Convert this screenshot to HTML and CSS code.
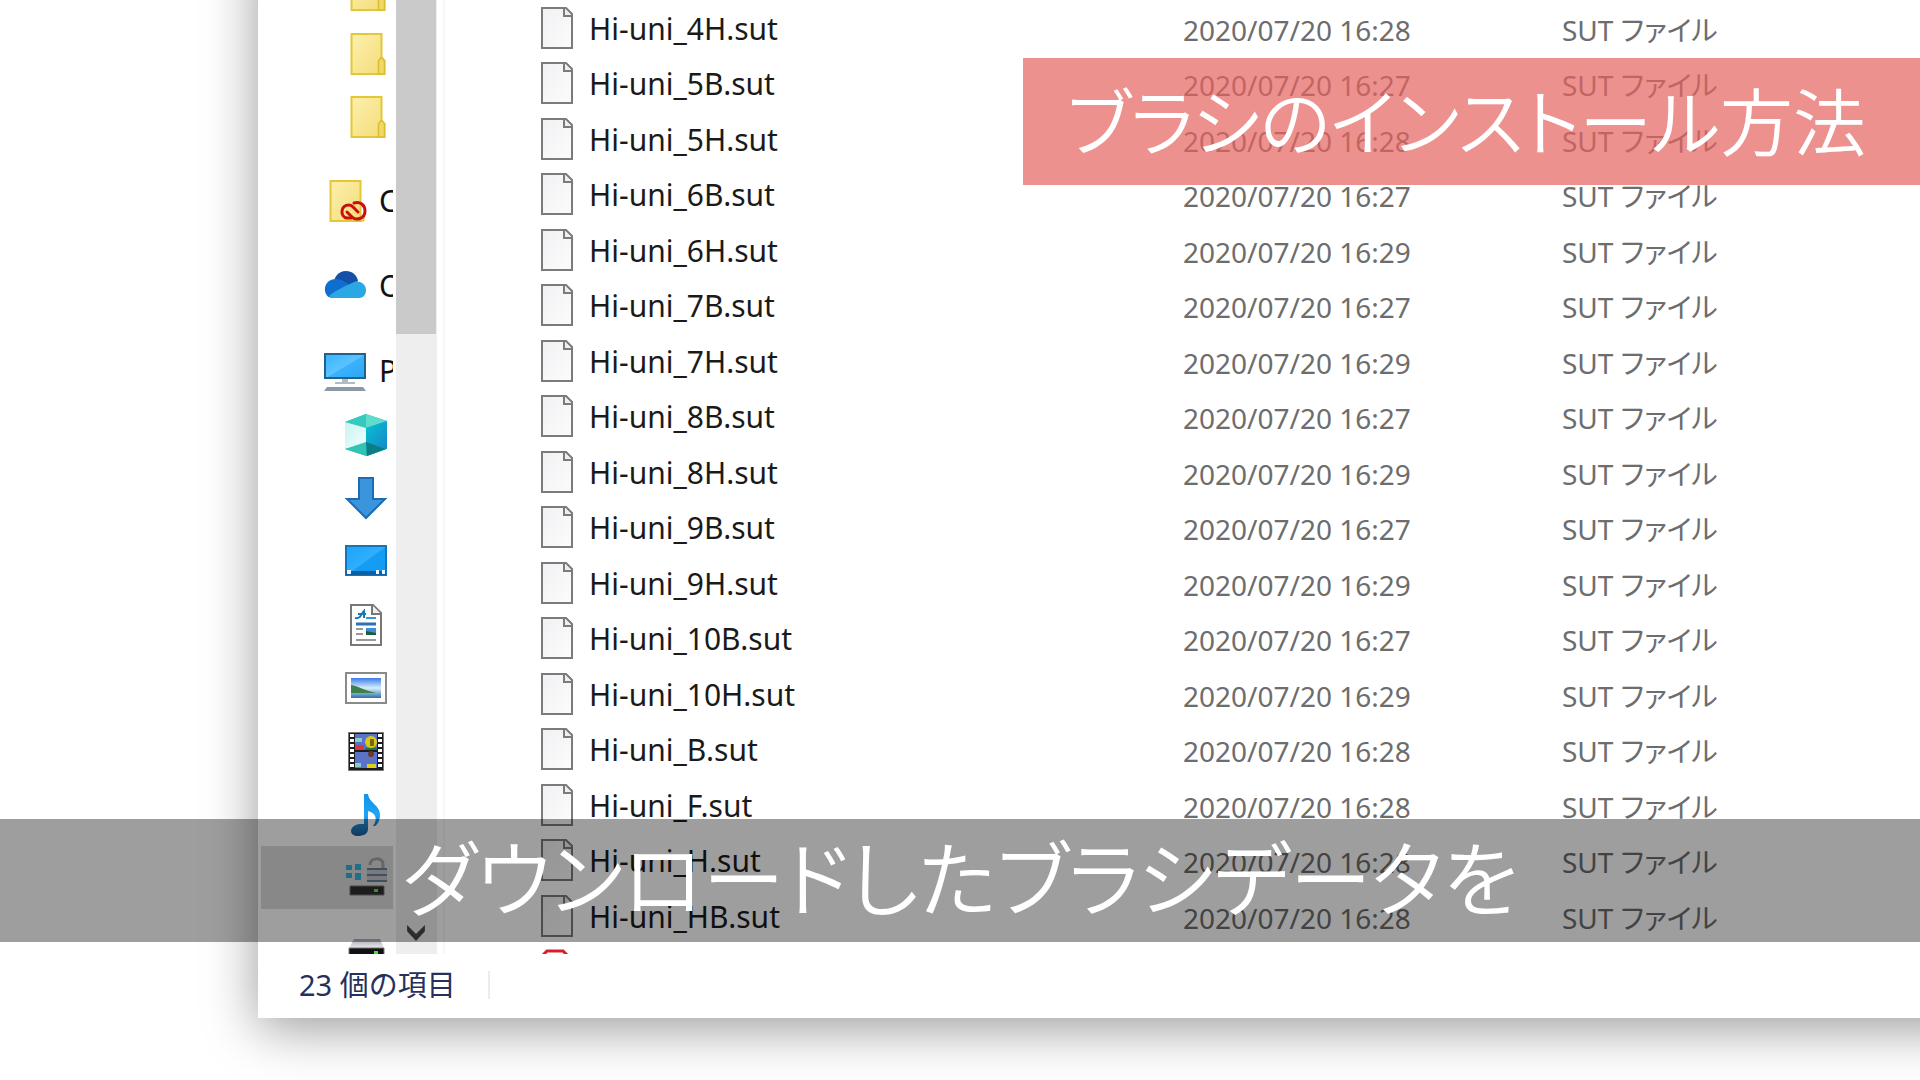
FILE: index.html
```html
<!DOCTYPE html>
<html lang="ja">
<head>
<meta charset="utf-8">
<title>ブラシのインストール方法</title>
<link rel="stylesheet" href="styles.css">
</head>
<body>
<svg class="defs" aria-hidden="true">
  <defs>
    <linearGradient id="gFolder" x1="0" y1="0" x2="1" y2="1"><stop offset="0" stop-color="#fdf0ae"/><stop offset="1" stop-color="#f3dc78"/></linearGradient>
    <linearGradient id="gScreen" x1="0" y1="0" x2="1" y2="1"><stop offset="0" stop-color="#35b4ff"/><stop offset=".5" stop-color="#5cc3ff"/><stop offset=".52" stop-color="#3bb2fb"/><stop offset="1" stop-color="#2aa6f5"/></linearGradient>
    <linearGradient id="gDesk" x1="0" y1="0" x2="1" y2="1"><stop offset="0" stop-color="#1ba4fb"/><stop offset=".5" stop-color="#30aefc"/><stop offset=".52" stop-color="#149df5"/><stop offset="1" stop-color="#1699f0"/></linearGradient>
    <linearGradient id="gPage" x1="0" y1="0" x2="1" y2="1"><stop offset="0" stop-color="#f1f1f3"/><stop offset="1" stop-color="#fcfcfd"/></linearGradient>
    <linearGradient id="gCube" x1="0" y1="0" x2="1" y2="1"><stop offset="0" stop-color="#c9f3f1"/><stop offset="1" stop-color="#f1fffd"/></linearGradient>
    <linearGradient id="gCubeR" x1="0" y1="0" x2="1" y2="1"><stop offset="0" stop-color="#07c3d2"/><stop offset="1" stop-color="#1687c9"/></linearGradient>
    <linearGradient id="gSky" x1="0" y1="0" x2="0" y2="1"><stop offset="0" stop-color="#3d7be8"/><stop offset=".5" stop-color="#d6effb"/><stop offset="1" stop-color="#2f6fa8"/></linearGradient>
    <linearGradient id="gNote" x1="0" y1="0" x2="0" y2="1"><stop offset="0" stop-color="#1593e6"/><stop offset=".5" stop-color="#1ea4f4"/><stop offset="1" stop-color="#1e5f9c"/></linearGradient>
    <linearGradient id="gDrive" x1="0" y1="0" x2="0" y2="1"><stop offset="0" stop-color="#a9a9b0"/><stop offset="1" stop-color="#e8e8ee"/></linearGradient>
    <symbol id="folder" viewBox="0 0 42 42"><path d="M6.500 1h30v24.500l3 2V41h-33z" fill="url(#gFolder)" stroke="#e3c738" stroke-width="2"/><path d="M33.500 41V28l2-3h2l2 3v13z" fill="#f0d869" stroke="#dcbd2e" stroke-width="1.500"/></symbol>
    <symbol id="file" viewBox="0 0 32 42"><path d="M1 1h24l6 6v34H1z" fill="url(#gPage)" stroke="#7b7b7b" stroke-width="2"/><path d="M23 1v8h8" fill="#eee" stroke="#7b7b7b" stroke-width="2"/></symbol>
  </defs>
</svg>

<main class="stage">
  <section class="window">
    <div class="panes">
      <nav class="tree">
        <ul class="group">
          <li class="node sub"><svg class="icon"><use href="#folder"/></svg></li>
          <li class="node sub"><svg class="icon"><use href="#folder"/></svg></li>
          <li class="node sub"><svg class="icon"><use href="#folder"/></svg></li>
        </ul>
        <ul class="group">
          <li class="node"><svg class="icon" viewBox="0 0 42 42"><path d="M6.500 1h30v40h-30z" fill="url(#gFolder)" stroke="#e3c738" stroke-width="2"/><path d="M36 36h4v5h-4z" fill="#f0d869" stroke="#dcbd2e"/><g fill="none" stroke="#c9100f" stroke-width="3" stroke-linecap="round"><path d="M27 38h-4c-7-1-7-13 2-13 3 0 4 2 6 4l3 3"/><path d="M30 23c6-2 11 2 11 8 0 8-9 10-13 6l-5-5"/></g></svg>C</li>
        </ul>
        <ul class="group">
          <li class="node"><svg class="icon" viewBox="0 0 42 42"><path d="M10 20C9 13 14 6 22 6c6 0 11 4 12 10l-8 6z" fill="#1450a8"/><path d="M8 33c-10-1-10-19 4-19 7 0 10 5 20 8L14 33z" fill="#0f6fd0"/><path d="M5 31c7-6 17-10 25-14 7-2 12 3 12 8 0 4-2 8-7 8H8z" fill="#2aa7e4"/></svg>O</li>
        </ul>
        <ul class="group">
          <li class="node"><svg class="icon" viewBox="0 0 42 42"><path d="M1 4h40v24H1z" fill="url(#gScreen)" stroke="#23618c" stroke-width="2"/><path d="M18 29h6v3h7v2H11v-2h7z" fill="#b3bcc4"/><path d="M3 37h36l3 4H0z" fill="#8d99a7"/></svg>P</li>
          <li class="node sub"><svg class="icon" viewBox="0 0 42 42"><path d="M0 8l21-8 21 7v28l-20 7L0 35z" fill="#20b6b8"/><path d="M0 8l21-8v14z" fill="#35cabd"/><path d="M21 0l21 7-21 7z" fill="#5fdccc"/><path d="M0 8l21 6v17L0 35z" fill="url(#gCube)"/><path d="M21 14l21-7v28l-21-6z" fill="url(#gCubeR)"/><path d="M0 35l21-7v14z" fill="#2fc4b4"/><path d="M21 28l20 7-19 7z" fill="#0b7d86"/></svg></li>
          <li class="node sub"><svg class="icon" viewBox="0 0 42 42"><path d="M14 1h14v21h12L21 41 2 22h12z" fill="#3a95dc" stroke="#1b6cb4" stroke-width="2"/></svg></li>
          <li class="node sub"><svg class="icon" viewBox="0 0 42 42"><path d="M1 6h40v29H1z" fill="url(#gDesk)" stroke="#1874b8" stroke-width="2"/><path d="M1 31h40v4H1z" fill="#0c5fa3"/><path d="M2 30h4v4H2zM31 30h3v4h-3zM37 30h3v4h-3z" fill="#e8f6ff"/></svg></li>
          <li class="node sub"><svg class="icon" viewBox="0 0 42 42"><path d="M6 1h22l8 8v32H6z" fill="#fff" stroke="#777" stroke-width="2"/><path d="M27 1v9h9" fill="#eee" stroke="#777" stroke-width="2"/><path d="M10 14c6 1 6-4 9-7v7m-6-4h8" fill="none" stroke="#1b78b8" stroke-width="2"/><path d="M21 14h10" stroke="#2f9bd6" stroke-width="2"/><path d="M11 20h20" stroke="#2f6fb4" stroke-width="3"/><path d="M11 25h7M11 30h7M11 36h20" stroke="#999" stroke-width="2"/><path d="M21 24h10v7H21z" fill="#3f8fd8"/><path d="M21 27l10 2v2H21z" fill="#1c5b40"/></svg></li>
          <li class="node sub"><svg class="icon" viewBox="0 0 42 42"><path d="M1 6h40v30H1z" fill="#fff" stroke="#8a8a8a" stroke-width="2"/><path d="M6 11h30v20H6z" fill="url(#gSky)"/><path d="M6 18c8 1 14 6 25 8H6z" fill="#3f7f4c"/></svg></li>
          <li class="node sub"><svg class="icon" viewBox="0 0 42 42"><path d="M3.500 2.500h35v38h-35z" fill="#1b1b20" stroke="#777"/><path d="M10 4h22v16H10zM10 22h22v16H10z" fill="#5a72c8"/><path d="M10 15h9v5h-9z" fill="#d8393f"/><path d="M10 8h7v4h-7zM10 33h6v4h-6z" fill="#8fc9c8"/><circle cx="26" cy="12" r="6" fill="#d8c916"/><path d="M25 9h4v7h-4z" fill="#7a6612"/><path d="M20 18h12v2H20z" fill="#24733c"/><circle cx="26" cy="24" r="3" fill="#6e3820"/><path d="M22 34h9v4h-9z" fill="#e0cf13"/><path d="M7 4v35M35 4v35" stroke="#fff" stroke-width="4" stroke-dasharray="3 2"/></svg></li>
          <li class="node sub"><svg class="icon" viewBox="0 0 42 42"><path d="M19 0h4c1 9 12 11 12 21 0 5-2 9-5 11h-2c5-7 3-13-5-15v18c0 5-5 7-10 7-10 0-9-11 2-12h4z" fill="url(#gNote)"/></svg></li>
          <li class="node sub selected"><svg class="icon" viewBox="0 0 42 42"><path d="M1 8h6v5H1zM10 7h6v6h-6zM1 16h6v5H1zM10 16h6v7h-6z" fill="#32b4dd"/><path d="M25 8C25 0 38 0 38 7v4" fill="none" stroke="#a5a5a5" stroke-width="3"/><path d="M22 12h20v12H22z" fill="#c2c6ca"/><path d="M22 12h20M22 18h20M22 24h20" stroke="#68819a" stroke-width="2"/><path d="M5 29h34v9H5z" fill="#303030" stroke="#777"/><path d="M29 32h4v3h-4z" fill="#63e03c"/></svg></li>
          <li class="node sub"><svg class="icon" viewBox="0 0 42 42"><path d="M9 19h26l4 9H4z" fill="url(#gDrive)"/><path d="M4 28h35v10H4z" fill="#111" stroke="#777"/><path d="M29 31h4v4h-4z" fill="#3fe826"/></svg></li>
        </ul>
      </nav>
      <div class="scrollbar">
        <div class="thumb"></div>
        <button class="down" type="button" aria-label="下へスクロール"><svg viewBox="0 0 20 18"><path d="M0 2V0l10 10L20 0v7L10 18 0 7z" fill="#484848"/></svg></button>
      </div>
      <div class="list">
        <table class="files">
          <colgroup><col class="c-name"><col class="c-date"><col></colgroup>
          <tbody>
            <tr><td class="name"><div class="entry"><svg class="doc"><use href="#file"/></svg><span>Hi-uni_4H.sut</span></div></td><td>2020/07/20 16:28</td><td>SUT ファイル</td></tr>
            <tr><td class="name"><div class="entry"><svg class="doc"><use href="#file"/></svg><span>Hi-uni_5B.sut</span></div></td><td>2020/07/20 16:27</td><td>SUT ファイル</td></tr>
            <tr><td class="name"><div class="entry"><svg class="doc"><use href="#file"/></svg><span>Hi-uni_5H.sut</span></div></td><td>2020/07/20 16:28</td><td>SUT ファイル</td></tr>
            <tr><td class="name"><div class="entry"><svg class="doc"><use href="#file"/></svg><span>Hi-uni_6B.sut</span></div></td><td>2020/07/20 16:27</td><td>SUT ファイル</td></tr>
            <tr><td class="name"><div class="entry"><svg class="doc"><use href="#file"/></svg><span>Hi-uni_6H.sut</span></div></td><td>2020/07/20 16:29</td><td>SUT ファイル</td></tr>
            <tr><td class="name"><div class="entry"><svg class="doc"><use href="#file"/></svg><span>Hi-uni_7B.sut</span></div></td><td>2020/07/20 16:27</td><td>SUT ファイル</td></tr>
            <tr><td class="name"><div class="entry"><svg class="doc"><use href="#file"/></svg><span>Hi-uni_7H.sut</span></div></td><td>2020/07/20 16:29</td><td>SUT ファイル</td></tr>
            <tr><td class="name"><div class="entry"><svg class="doc"><use href="#file"/></svg><span>Hi-uni_8B.sut</span></div></td><td>2020/07/20 16:27</td><td>SUT ファイル</td></tr>
            <tr><td class="name"><div class="entry"><svg class="doc"><use href="#file"/></svg><span>Hi-uni_8H.sut</span></div></td><td>2020/07/20 16:29</td><td>SUT ファイル</td></tr>
            <tr><td class="name"><div class="entry"><svg class="doc"><use href="#file"/></svg><span>Hi-uni_9B.sut</span></div></td><td>2020/07/20 16:27</td><td>SUT ファイル</td></tr>
            <tr><td class="name"><div class="entry"><svg class="doc"><use href="#file"/></svg><span>Hi-uni_9H.sut</span></div></td><td>2020/07/20 16:29</td><td>SUT ファイル</td></tr>
            <tr><td class="name"><div class="entry"><svg class="doc"><use href="#file"/></svg><span>Hi-uni_10B.sut</span></div></td><td>2020/07/20 16:27</td><td>SUT ファイル</td></tr>
            <tr><td class="name"><div class="entry"><svg class="doc"><use href="#file"/></svg><span>Hi-uni_10H.sut</span></div></td><td>2020/07/20 16:29</td><td>SUT ファイル</td></tr>
            <tr><td class="name"><div class="entry"><svg class="doc"><use href="#file"/></svg><span>Hi-uni_B.sut</span></div></td><td>2020/07/20 16:28</td><td>SUT ファイル</td></tr>
            <tr><td class="name"><div class="entry"><svg class="doc"><use href="#file"/></svg><span>Hi-uni_F.sut</span></div></td><td>2020/07/20 16:28</td><td>SUT ファイル</td></tr>
            <tr><td class="name"><div class="entry"><svg class="doc"><use href="#file"/></svg><span>Hi-uni_H.sut</span></div></td><td>2020/07/20 16:28</td><td>SUT ファイル</td></tr>
            <tr><td class="name"><div class="entry"><svg class="doc"><use href="#file"/></svg><span>Hi-uni_HB.sut</span></div></td><td>2020/07/20 16:28</td><td>SUT ファイル</td></tr>
            <tr><td class="name"><div class="entry"><svg class="doc" viewBox="0 0 32 42"><path d="M2 6l4-4h16l8 8v30H2z" fill="#fff" stroke="#d81e2c" stroke-width="3"/></svg></div></td><td></td><td></td></tr>
          </tbody>
        </table>
      </div>
    </div>
    <footer class="status"><span class="count">23 個の項目</span></footer>
  </section>
  <h1 class="title">ブラシのインストール方法</h1>
  <p class="caption">ダウンロードしたブラシデータを</p>
</main>
</body>
</html>
```
FILE: styles.css
```css
* { box-sizing: border-box; }

body {
  margin: 0;
  background: #fff;
  font-family: "Noto Sans", "Noto Sans CJK JP", sans-serif;
}

.defs { position: absolute; width: 0; height: 0; }

.stage {
  position: relative;
  display: flex;
  height: 100vh;
  overflow: hidden;
}

/* The window runs past the top and right edges of the view. */
.window {
  flex: 1;
  display: flex;
  flex-direction: column;
  min-width: 0;
  margin: -60px -60px 62px 258px;
  padding-top: 60px;
  background: #fff;
  box-shadow: 0 10px 50px rgba(0, 0, 0, .4);
}

.panes {
  flex: 1;
  display: flex;
  min-height: 0;
  overflow: hidden;
}

.tree {
  width: 135px;
  padding-left: 3px;
  margin-top: -42px;
  overflow: hidden;
  font-size: 30px;
  line-height: 36px;
  color: #111;
}

.group { margin: 0 0 21px; padding: 0; list-style: none; }

.node {
  display: flex;
  align-items: center;
  gap: 13px;
  height: 63px;
  padding-left: 63px;
}
.node:nth-child(3n+1) { height: 64px; }
.node.sub { padding-left: 84px; }
.node.selected { background: #dcdcdc; }

.icon { flex: none; width: 42px; height: 42px; overflow: visible; }

.scrollbar {
  display: flex;
  flex-direction: column;
  justify-content: space-between;
  width: 41px;
  margin-left: 3px;
  background: #eee;
}
.thumb { height: 35%; margin-right: 1px; background: #cacaca; }
.down {
  display: flex;
  padding: 0 0 13px 10px;
  border: 0;
  background: none;
}
.down svg { width: 20px; height: 16px; }

.list {
  flex: 1;
  margin-left: 6px;
  padding-left: 96px;
  border-left: 2px solid #f7f7f7;
  overflow: hidden;
}

.files {
  width: 100%;
  height: 997px;
  table-layout: fixed;
  border-collapse: collapse;
  font-size: 28px;
  line-height: 40px;
  color: #6d6d6d;
}
.c-name { width: 642px; }
.c-date { width: 379px; }
.files td { padding: 4px 0 0; white-space: nowrap; font-feature-settings: "palt"; }
.files .name {
  padding: 0;
  font-size: 30px;
  color: #1a1a1a;
}
.entry { display: flex; align-items: center; gap: 16px; }
.entry span { padding-top: 2px; }
.doc { width: 32px; height: 42px; }

.status {
  display: flex;
  align-items: center;
  height: 64px;
  padding: 0 0 2px 41px;
  font-size: 29px;
  color: #27305c;
}
.count { padding-right: 32px; border-right: 2px solid #ececec; line-height: 28px; }

.title,
.caption {
  position: absolute;
  right: 0;
  margin: 0;
  color: #fff;
  font-family: "Noto Sans CJK JP", sans-serif;
  font-weight: 350;
  font-feature-settings: "palt";
  text-align: center;
  white-space: nowrap;
}
.title {
  top: 58px;
  padding: 0 54px 6px 44px;
  background: rgba(229, 99, 95, .7);
  font-size: 73px;
  line-height: 121px;
}
.caption {
  bottom: 138px;
  left: 0;
  padding-bottom: 12px;
  background: rgba(0, 0, 0, .38);
  font-size: 82px;
  line-height: 111px;
}
```
